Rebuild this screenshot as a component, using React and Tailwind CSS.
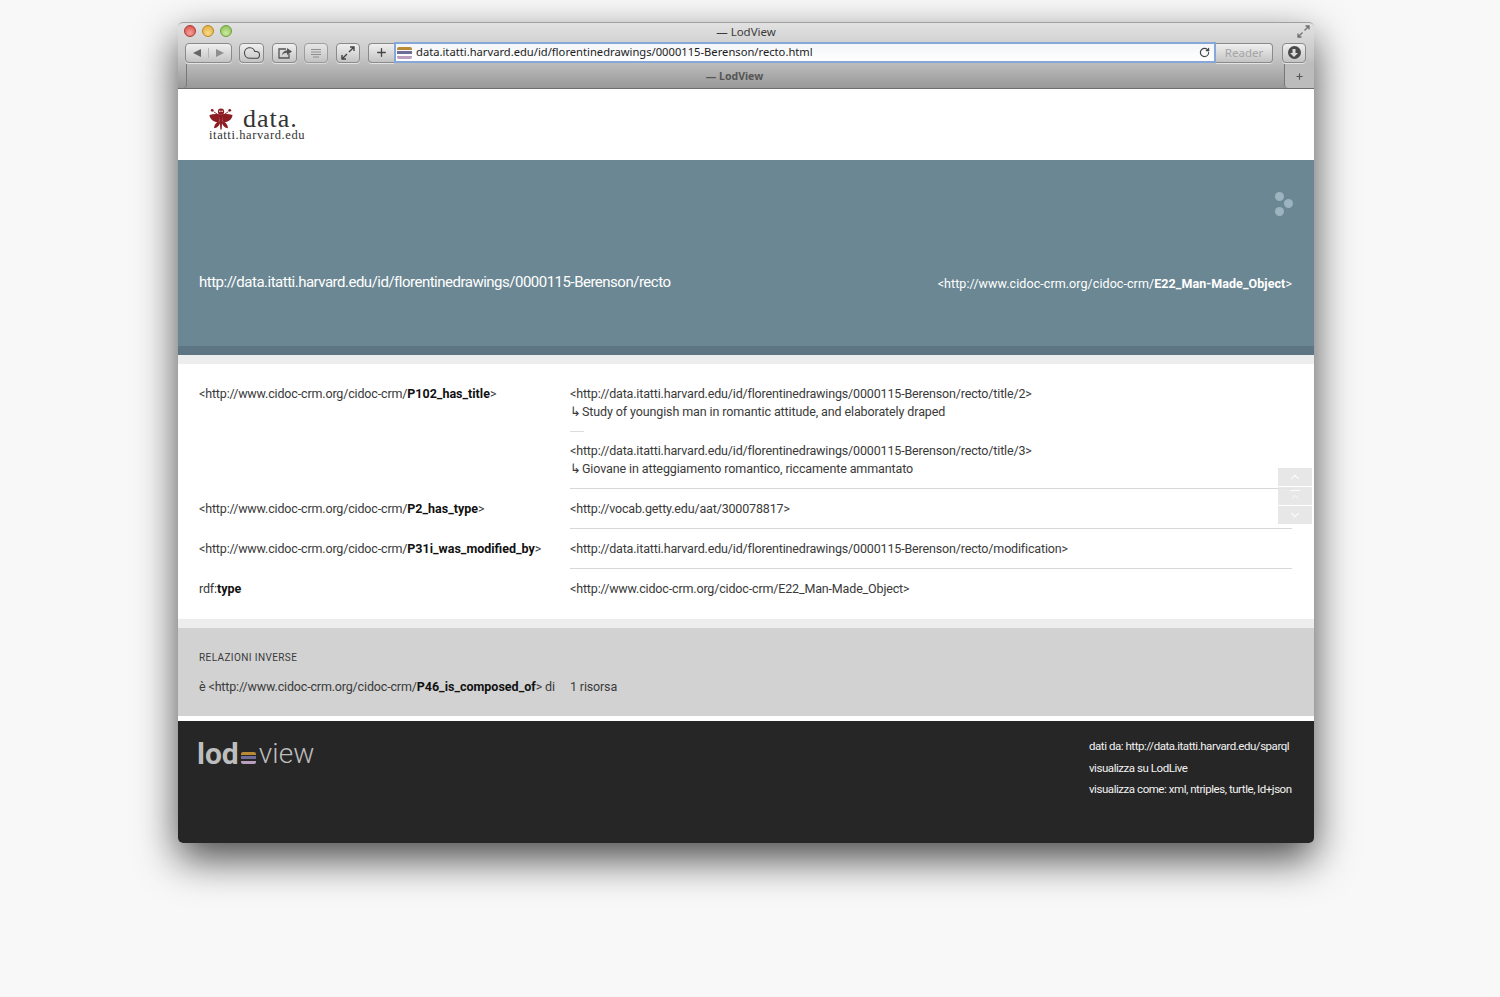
import { ChevronDown, ChevronUp, Cloud, Plus, RotateCw } from "lucide-react";

const CRM = "http://www.cidoc-crm.org/cidoc-crm/";
const RECTO = "http://data.itatti.harvard.edu/id/florentinedrawings/0000115-Berenson/recto";

const toolBtn =
  "h-[20px] flex items-center justify-center rounded-[4px] border border-[#8a8a8a] bg-gradient-to-b from-[#f0f0f0] to-[#c4c4c4] shadow-[0_1px_0_rgba(255,255,255,0.6)]";

function Bars({ className }) {
  return (
    <span className={`flex flex-col ${className}`}>
      <span className="h-[3px] rounded-t-[2px] bg-[#b98a35]" />
      <span className="h-[3px] bg-[#6f6c96]" />
      <span className="h-[3px] rounded-b-[2px] bg-[#b99fbd]" />
    </span>
  );
}

function Moth() {
  return (
    <svg width="24" height="24" viewBox="0 0 26 26" fill="#8c1c22">
      <circle cx="13" cy="4" r="3.4" />
      <circle cx="11.8" cy="3.6" r="0.8" fill="#fff" />
      <circle cx="14.2" cy="3.6" r="0.8" fill="#fff" />
      <circle cx="3.5" cy="2.5" r="1.5" />
      <circle cx="22.5" cy="2.5" r="1.5" />
      <path d="M5 4 L11 8 M21 4 L15 8" stroke="#8c1c22" strokeWidth="1" />
      <path d="M12 7 C8 6 4 6.5 0.5 7.5 C1 12 5 16 11.5 15 Z" />
      <path d="M14 7 C18 6 22 6.5 25.5 7.5 C25 12 21 16 14.5 15 Z" />
      <path d="M11.5 14 C8 15 5.5 18 5.5 22 C9 21.5 11 19 12 16.5 Z" />
      <path d="M14.5 14 C18 15 20.5 18 20.5 22 C17 21.5 15 19 14 16.5 Z" />
      <path d="M11.4 7 H14.6 L13.8 22 L13 24.5 L12.2 22 Z" />
    </svg>
  );
}

function BrowserChrome() {
  return (
    <div className="h-[67px] border-t border-b border-t-[#a0a0a0] border-b-[#6d6d6d] rounded-t-[5px] bg-gradient-to-b from-[#e2e2e2] via-[#c8c8c8] to-[#989898] font-['Noto_Sans',sans-serif]">
      <div className="relative h-[18px] flex items-center justify-center text-[11.5px] text-[#3c3c3c]">
        <div className="absolute left-[6px] top-[2px] flex gap-[6px]">
          <span className="w-[12px] h-[12px] rounded-full border border-[#a83a35] bg-[radial-gradient(circle_at_50%_70%,#f5a09a,#d8483f)]" />
          <span className="w-[12px] h-[12px] rounded-full border border-[#b5892c] bg-[radial-gradient(circle_at_50%_70%,#f8db8c,#e0a52f)]" />
          <span className="w-[12px] h-[12px] rounded-full border border-[#6d9c3d] bg-[radial-gradient(circle_at_50%_70%,#cbeb9f,#85bb4d)]" />
        </div>
        <span>— LodView</span>
        <svg className="absolute right-[4px] top-[2px]" width="13" height="13" viewBox="0 0 13 13" fill="none" stroke="#6f6f6f" strokeWidth="1.3">
          <path d="M7.5 5.5 L12 1 M8.5 1 H12 V4.5 M5.5 7.5 L1 12 M4.5 12 H1 V8.5" />
        </svg>
      </div>
      <div className="h-[23px] flex items-center pl-[7px] pr-[8px]">
        <div className={`${toolBtn} w-[47px]`}>
          <span className="flex-1 flex justify-center border-r border-[#b5b5b5]">
            <svg width="10" height="10" viewBox="0 0 10 10" fill="#666"><path d="M9 1 V9 L1 5 Z" /></svg>
          </span>
          <span className="flex-1 flex justify-center">
            <svg width="10" height="10" viewBox="0 0 10 10" fill="#8f8f8f"><path d="M1 1 V9 L9 5 Z" /></svg>
          </span>
        </div>
        <div className={`${toolBtn} w-[25px] ml-[7px]`}>
          <Cloud size={18} strokeWidth={1.4} color="#444" />
        </div>
        <div className={`${toolBtn} w-[25px] ml-[8px]`}>
          <svg width="16" height="14" viewBox="0 0 16 14" fill="none">
            <path d="M9 3 H2 V12 H12 V8" stroke="#555" strokeWidth="1.3" />
            <path d="M5 9 C5.5 6 7.5 4.5 10 4.5 V2 L15 5.5 L10 9 V6.8 C8 6.8 6.5 7.5 5 9 Z" fill="#555" />
          </svg>
        </div>
        <div className={`${toolBtn} w-[24px] ml-[7px] opacity-70`}>
          <svg width="12" height="10" viewBox="0 0 12 10" fill="none" stroke="#777">
            <path d="M1 1.5 H11 M1 4 H11 M1 6.5 H11 M3 9 H9" />
          </svg>
        </div>
        <div className={`${toolBtn} w-[24px] ml-[8px]`}>
          <svg width="14" height="14" viewBox="0 0 14 14" fill="none" stroke="#444" strokeWidth="1.4">
            <path d="M8 6 L13 1 M9 1 H13 V5 M6 8 L1 13 M5 13 H1 V9" />
          </svg>
        </div>
        <div className={`${toolBtn} w-[26px] ml-[8px] rounded-r-none border-r-0`}>
          <Plus size={13} strokeWidth={2.4} color="#444" />
        </div>
        <div className="flex-1 h-[21px] flex items-center pl-[1px] pr-[4px] border-2 border-[#86a8d8] bg-gradient-to-b from-[#f3f5f8] to-white text-[11.2px] text-[#1c1c1c]">
          <Bars className="w-[15px] mr-[4px] gap-[1.5px]" />
          <span className="flex-1 whitespace-nowrap">data.itatti.harvard.edu/id/florentinedrawings/0000115-Berenson/recto.html</span>
          <RotateCw size={11} strokeWidth={2.6} color="#444" />
        </div>
        <div className={`${toolBtn} w-[57px] rounded-l-none border-l-0 text-[11.5px] text-[#a5a5a5]`}>Reader</div>
        <div className={`${toolBtn} w-[24px] ml-[9px]`}>
          <span className="w-[13px] h-[13px] rounded-full bg-[#4a4a4a] flex items-center justify-center">
            <svg width="8" height="8" viewBox="0 0 8 8" fill="#ddd"><path d="M2.5 0 H5.5 V4 H8 L4 8 L0 4 H2.5 Z" /></svg>
          </span>
        </div>
      </div>
      <div className="flex h-[24px] text-[10.5px] font-bold text-[#555]">
        <div className="w-[9px] border-r border-[#777] rounded-br-[4px]" />
        <div className="flex-1 flex items-center justify-center pr-[2px] pt-px">— LodView</div>
        <div className="w-[30px] flex items-center justify-center border-l border-[#777] rounded-bl-[4px] bg-[#bcbcbc]">
          <Plus size={9} strokeWidth={3} color="#555" />
        </div>
      </div>
    </div>
  );
}

function Prop({ pre = CRM, name }) {
  return (
    <>
      &lt;{pre}
      <b className="font-bold text-[#111] tracking-normal">{name}</b>&gt;
    </>
  );
}

function Row({ left, children, first, last }) {
  const top = first ? "pt-[10px]" : "pt-[11px]";
  return (
    <div className="flex">
      <div className={`w-[371px] shrink-0 ${top}`}>{left}</div>
      <div className={`flex-1 ${top} ${last ? "pb-[21px]" : "pb-[10px] border-b border-[#d8d8d8]"}`}>{children}</div>
    </div>
  );
}

function Literal({ children }) {
  return (
    <div className="tracking-[-0.11px]">
      <span className="mr-[-2px]">↳ </span>
      {children}
    </div>
  );
}

export default function App() {
  return (
    <div className="min-h-screen bg-[#f8f8f8] pt-[22px] pl-[178px]">
      <div className="relative w-[1136px] rounded-[5px] bg-white shadow-[0_16px_40px_rgba(0,0,0,0.7)]">
        <BrowserChrome />

        <div className="h-[71px] pl-[31px] pt-[19px] flex bg-white font-['Liberation_Serif',serif] text-[#333]">
          <div className="relative w-[100px]">
            <Moth />
            <span className="absolute left-[34px] top-[1px] text-[26px] leading-[20px] tracking-[1px]">data.</span>
            <span className="absolute left-0 top-[21px] text-[12.5px] leading-[12px] tracking-[0.6px] whitespace-nowrap">itatti.harvard.edu</span>
          </div>
        </div>

        <div className="font-['Roboto',sans-serif] text-[12.5px] leading-[18px] text-[#3a3a3a] tracking-[-0.16px]">
          <div className="relative h-[195px] bg-[#6b8793] border-b-[9px] border-[#5e7683] text-white">
            <div className="absolute top-[32px] right-[21px] w-[18px] h-[24px]">
              <span className="absolute left-0 top-0 w-[9px] h-[9px] rounded-full bg-[#9bb4bf]" />
              <span className="absolute right-0 top-[7px] w-[9px] h-[9px] rounded-full bg-[#9bb4bf]" />
              <span className="absolute left-0 top-[15px] w-[9px] h-[9px] rounded-full bg-[#9bb4bf]" />
            </div>
            <div className="flex justify-between items-center pl-[21px] pr-[22px] pt-[111px]">
              <span className="text-[15px] leading-[22px] tracking-[-0.5px]">{RECTO}</span>
              <span className="text-[12.5px] pt-[3px] tracking-[0.07px]">
                &lt;{CRM}<b className="font-bold">E22_Man-Made_Object</b>&gt;
              </span>
            </div>
          </div>

          <div className="h-[9px] bg-[#ededed]" />

          <div className="pl-[21px] pr-[22px] pt-[11px] bg-white">
            <Row first left={<Prop name="P102_has_title" />}>
              <div>&lt;{RECTO}/title/2&gt;</div>
              <Literal>Study of youngish man in romantic attitude, and elaborately draped</Literal>
              <div className="w-[14px] h-px bg-[#ddd] mt-[10px] mb-[10px]" />
              <div>&lt;{RECTO}/title/3&gt;</div>
              <Literal>Giovane in atteggiamento romantico, riccamente ammantato</Literal>
            </Row>
            <Row left={<Prop name="P2_has_type" />}>&lt;http://vocab.getty.edu/aat/300078817&gt;</Row>
            <Row left={<Prop name="P31i_was_modified_by" />}>&lt;{RECTO}/modification&gt;</Row>
            <Row last left={<>rdf:<b className="font-bold text-[#111] tracking-normal">type</b></>}>&lt;{CRM}E22_Man-Made_Object&gt;</Row>
          </div>

          <div className="h-[9px] bg-[#ededed]" />

          <div className="h-[88px] bg-[#d2d2d2] pl-[21px] pt-[24px]">
            <div className="text-[10px] leading-[12px] tracking-[0.4px] uppercase">Relazioni inverse</div>
            <div className="flex mt-[14px]">
              <div className="w-[371px] shrink-0 whitespace-nowrap">
                è <Prop name="P46_is_composed_of" /> di
              </div>
              <div>1 risorsa</div>
            </div>
          </div>

          <div className="h-[5px] bg-white" />

          <div className="h-[122px] rounded-b-[5px] bg-[#262626] flex justify-between pl-[19px] pr-[22px] text-[11.5px] text-[#f2f2f2] tracking-[-0.45px]">
            <div className="flex items-center h-[28px] mt-[19px] text-[28px] text-[#bdbdbd] tracking-[0.1px]">
              <span className="font-bold text-[30px] leading-[28px] tracking-normal">lod</span>
              <Bars className="w-[15px] ml-[2px] mr-[3px] gap-[1.5px] mt-[7px]" />
              <span className="font-light leading-[28px]">view</span>
            </div>
            <div className="w-[203px] pt-[15px] leading-[21.5px] whitespace-nowrap">
              <div>dati da: http://data.itatti.harvard.edu/sparql</div>
              <div>visualizza su LodLive</div>
              <div>visualizza come: xml, ntriples, turtle, ld+json</div>
            </div>
          </div>
        </div>

        {/* pulsanti di scorrimento sopra il contenuto */}
        <div className="absolute left-[1100px] top-[446px] w-[34px] flex flex-col gap-px text-[#fafafa]">
          <span className="h-[18px] bg-[#e4e4e4]/90 flex items-center justify-center"><ChevronUp size={14} /></span>
          <span className="h-[18px] bg-[#e4e4e4]/90 flex flex-col items-center justify-center">
            <span className="w-[10px] h-px bg-[#fafafa]" />
            <ChevronUp size={12} />
          </span>
          <span className="h-[18px] bg-[#e4e4e4]/90 flex items-center justify-center"><ChevronDown size={14} /></span>
        </div>
      </div>
    </div>
  );
}
